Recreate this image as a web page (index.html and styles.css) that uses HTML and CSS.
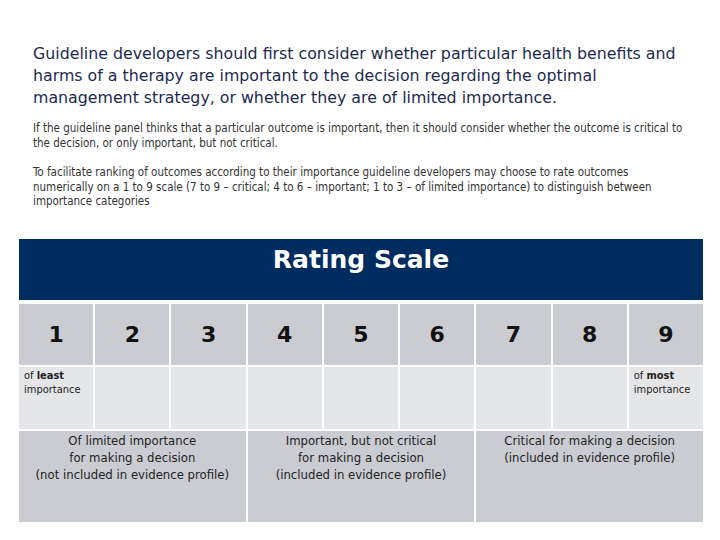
FILE: index.html
```html
<!DOCTYPE html>
<html>
<head>
<meta charset="utf-8">
<link rel="stylesheet" href="styles.css">
</head>
<body>
<div class="intro">
  <p class="lead">Guideline developers should first consider whether particular health benefits and harms of a therapy are important to the decision regarding the optimal management strategy, or whether they are of limited importance.</p>
  <p class="note">If the guideline panel thinks that a particular outcome is important, then it should consider whether the outcome is critical to the decision, or only important, but not critical.</p>
  <p class="note">To facilitate ranking of outcomes according to their importance guideline developers may choose to rate outcomes numerically on a 1 to 9 scale (7 to 9 – critical; 4 to 6 – important; 1 to 3 – of limited importance) to distinguish between importance categories</p>
</div>
<div class="scale">
  <div class="scale-title">Rating Scale</div>
  <div class="num">1</div><div class="num">2</div><div class="num">3</div>
  <div class="num">4</div><div class="num">5</div><div class="num">6</div>
  <div class="num">7</div><div class="num">8</div><div class="num">9</div>
  <div class="lab">of <b>least</b><br>importance</div>
  <div class="lab"></div><div class="lab"></div><div class="lab"></div>
  <div class="lab"></div><div class="lab"></div><div class="lab"></div>
  <div class="lab"></div>
  <div class="lab">of <b>most</b><br>importance</div>
  <div class="group">Of limited importance<br>for making a decision<br>(not included in evidence profile)</div>
  <div class="group">Important, but not critical<br>for making a decision<br>(included in evidence profile)</div>
  <div class="group">Critical for making a decision<br>(included in evidence profile)</div>
</div>
</body>
</html>
```
FILE: styles.css
```css
html, body { margin: 0; padding: 0; background: #fff; }
body { font-family: "DejaVu Sans Condensed", "DejaVu Sans", Verdana, sans-serif; }
.intro { padding: 43px 0 0 33px; width: 652px; }
.lead {
  margin: 0 0 12px 0;
  font-family: "DejaVu Sans", Verdana, sans-serif;
  font-size: 15.8px;
  line-height: 22px;
  color: #1b2a4e;
}
.note {
  margin: 0 0 15px 0;
  font-size: 11.5px;
  line-height: 14.5px;
  color: #333;
}
.scale {
  margin: 30px 17px 0 19px;
  display: grid;
  grid-template-columns: repeat(9, 1fr);
  gap: 2px;
}
.scale-title {
  grid-column: 1 / -1;
  background: #002c5f;
  color: #fff;
  font-family: "DejaVu Sans", Verdana, sans-serif;
  font-weight: bold;
  font-size: 25px;
  height: 61px;
  text-align: center;
  line-height: 42px;
  margin-bottom: 2px;
}
.num {
  background: #cbccd1;
  height: 61px;
  display: flex;
  align-items: center;
  justify-content: center;
  font-family: "DejaVu Sans", Verdana, sans-serif;
  font-weight: bold;
  font-size: 22px;
  color: #111;
}
.lab {
  background: #e5e6e8;
  height: 62px;
  padding: 2px 0 0 5px;
  box-sizing: border-box;
  font-size: 11px;
  line-height: 14px;
  color: #222;
}
.group {
  grid-column: span 3;
  background: #cbccd1;
  height: 91px;
  padding-top: 1px;
  box-sizing: border-box;
  text-align: center;
  font-size: 13px;
  line-height: 17px;
  color: #222;
}
```
